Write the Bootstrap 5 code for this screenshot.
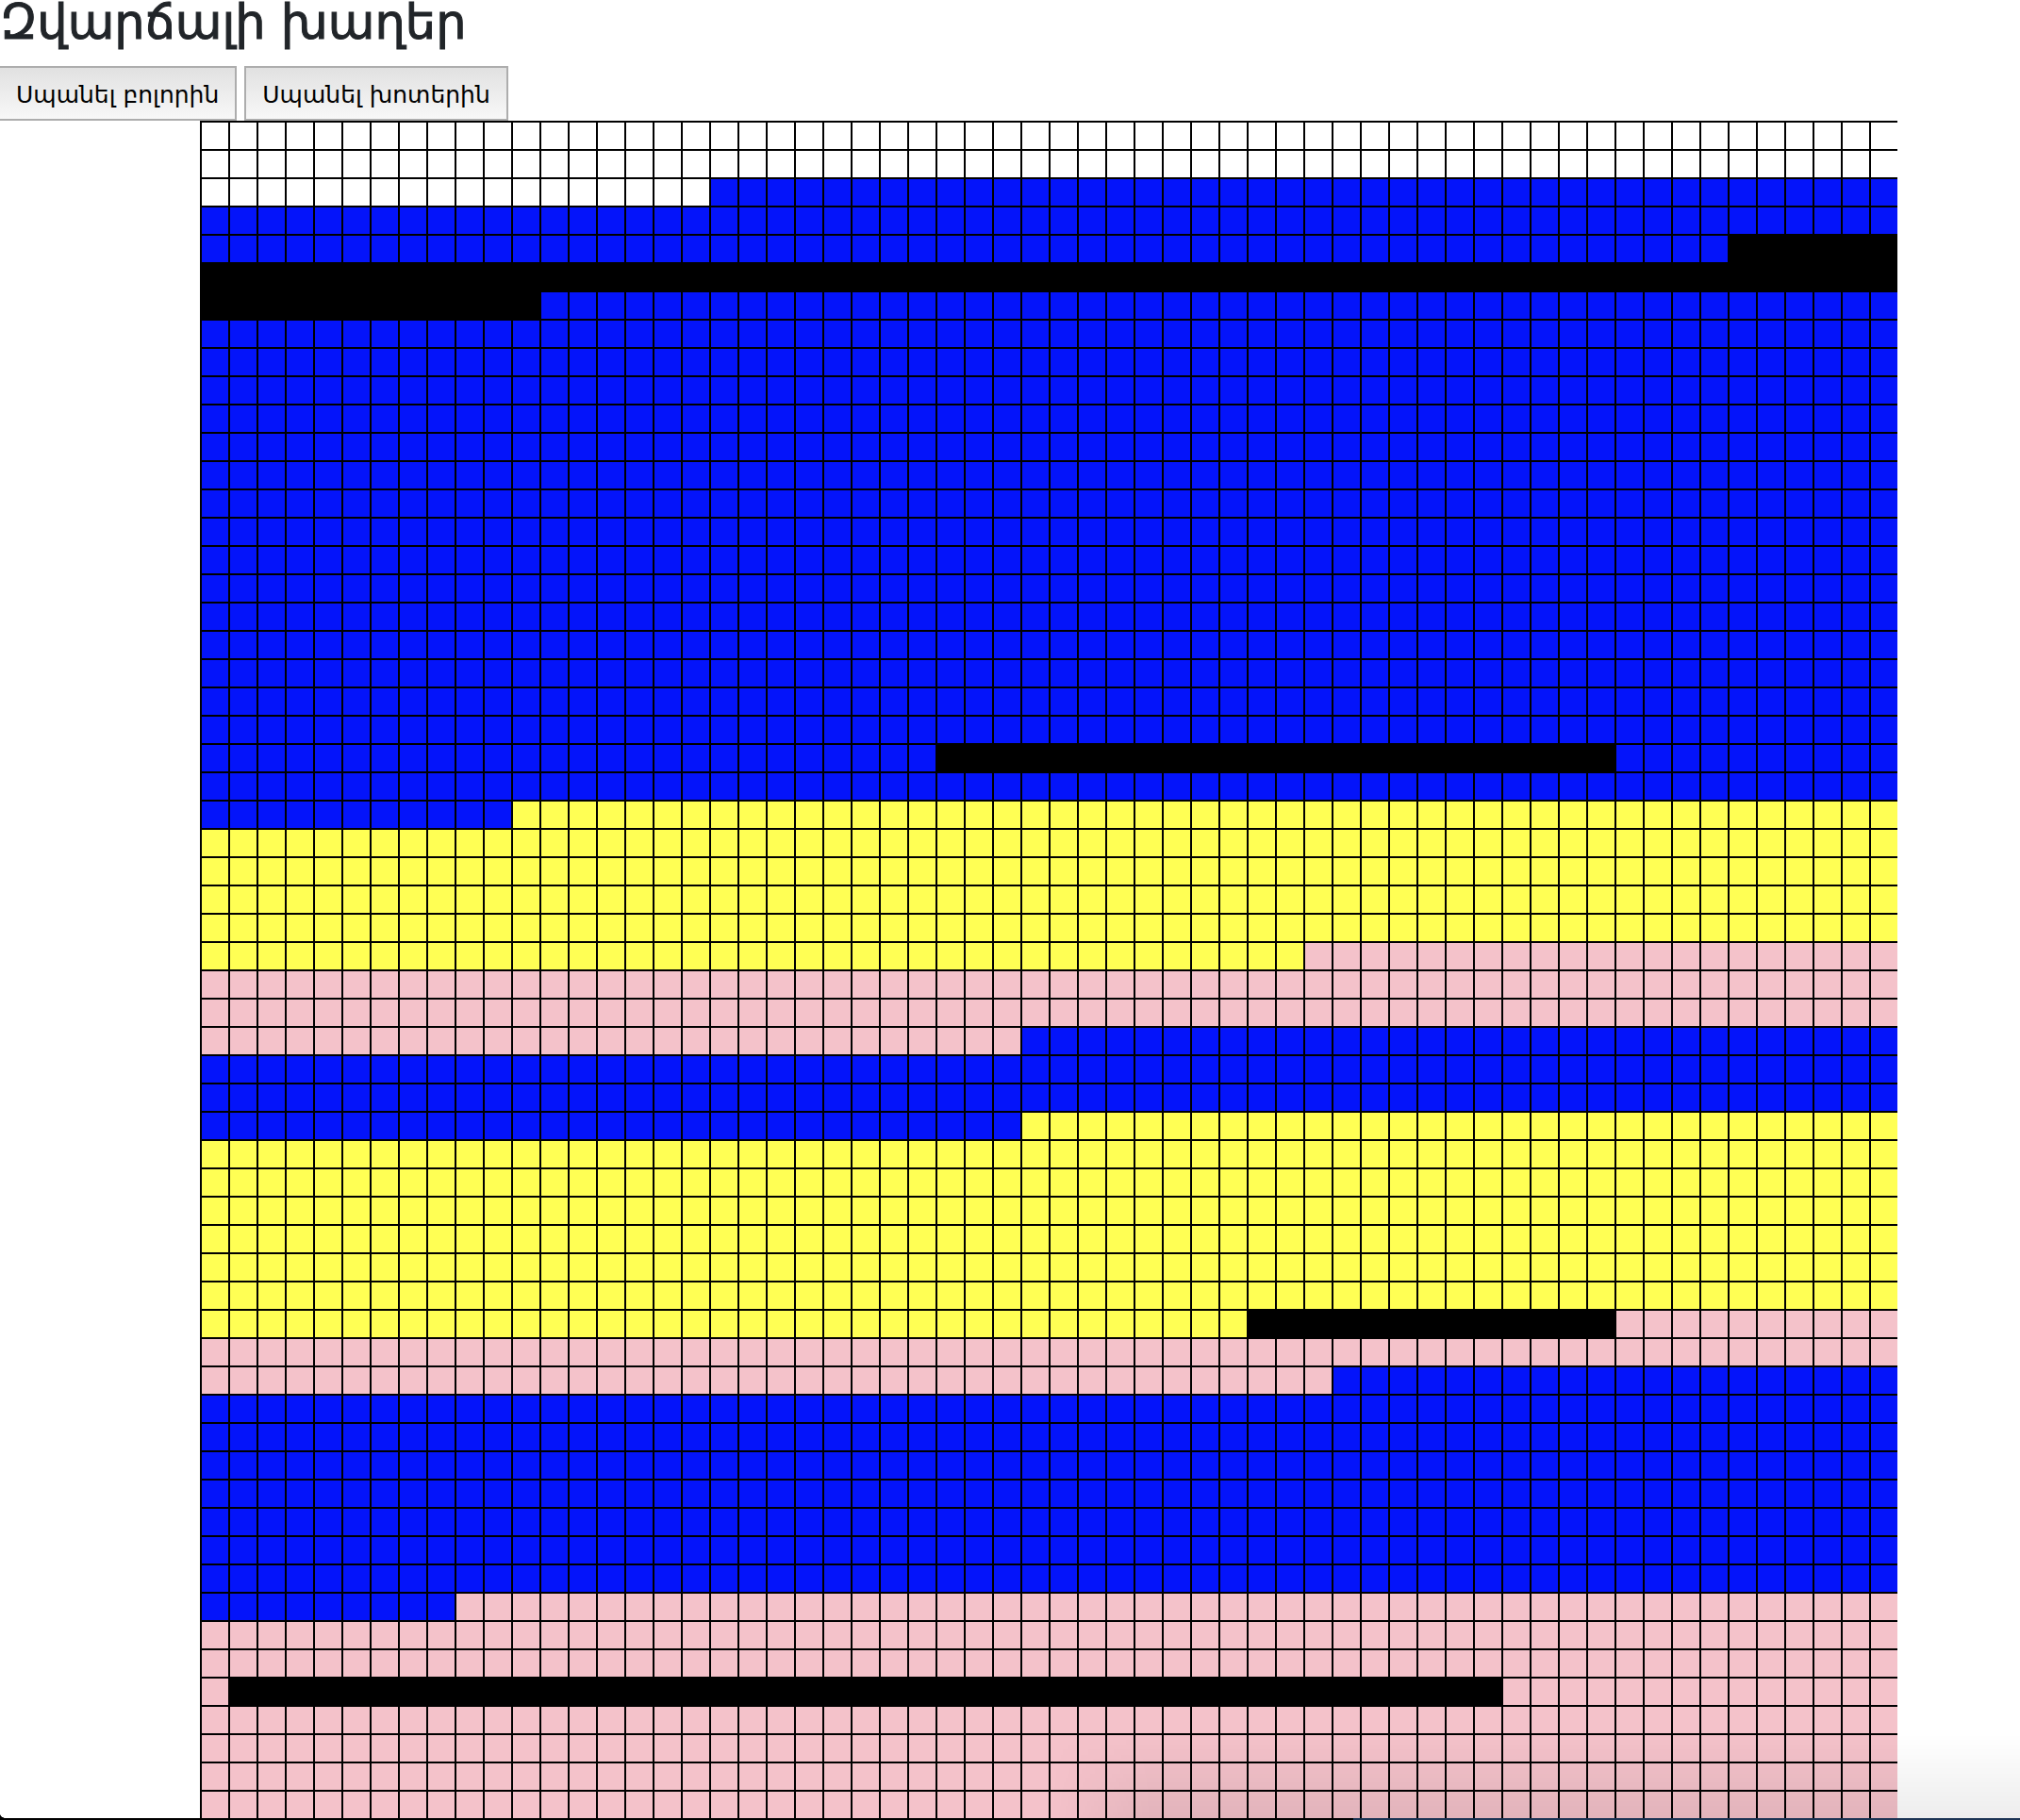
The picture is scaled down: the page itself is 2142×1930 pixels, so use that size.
<!DOCTYPE html>
<html lang="hy">
<head>
<meta charset="utf-8">
<meta name="viewport" content="width=device-width, initial-scale=1">
<title>Զվարճալի խաղեր</title>
<link href="https://cdn.jsdelivr.net/npm/bootstrap@5.3.0/dist/css/bootstrap.min.css" rel="stylesheet">
<style>
  body { font-family: "DejaVu Sans", sans-serif; background: #fff; overflow: hidden; }
  .page-title { font-size: 51px; line-height: 60px; margin-top: -6px; margin-bottom: 16px; font-weight: 400; color: #212529; -webkit-text-stroke: 1px #212529; }
  .kill-btn { height: 58px; padding: 3px 17px 0; border: 2px solid #adadad; background: linear-gradient(#e1e1e1, #f8f8f8); color: #000; font-size: 25px; line-height: 51px; }
  .kill-btn:first-child { border-left: 0; }
  .field { display: grid; grid-template-columns: repeat(60, 30px); grid-auto-rows: 30px; margin-left: 212px; }
  .field i { border-left: 2px solid #000; border-top: 2px solid #000; }
  .soil { background: #fff; } .water { background: #0414fa; } .sand { background: #ffff54; }
  .bloom { background: #f4c2ca; } .stone { background: #000; }
  .window-shade { height: 90px; background: linear-gradient(transparent, rgba(0,0,0,.07)); -webkit-mask-image: linear-gradient(90deg, transparent 52%, #000 57%); mask-image: linear-gradient(90deg, transparent 52%, #000 57%); }
  .window-edge { height: 2px; background: linear-gradient(90deg, #000 67%, #1c3454 67%); }
  .window-corner { width: 6px; height: 4px; margin-top: -4px; background: radial-gradient(ellipse 6px 4px at 100% 0, transparent 90%, #000); }
</style>
<script src="https://cdn.jsdelivr.net/npm/bootstrap@5.3.0/dist/js/bootstrap.bundle.min.js"></script>
</head>
<body>
<header>
  <h1 class="page-title">Զվարճալի խաղեր</h1>
  <div class="d-flex gap-2">
    <button type="button" class="kill-btn">Սպանել բոլորին</button>
    <button type="button" class="kill-btn">Սպանել խոտերին</button>
  </div>
</header>
<main class="field" id="field"></main>
<div class="fixed-bottom pe-none">
  <div class="window-shade"></div>
  <div class="window-corner"></div>
  <div class="window-edge"></div>
</div>
<script>
  // Each run: kind of cell, then the row and column where the run ends.
  const runs = [
    ['soil', 2, 18], ['water', 4, 54], ['stone', 6, 12], ['water', 22, 26], ['stone', 22, 50],
    ['water', 24, 11], ['sand', 29, 39], ['bloom', 32, 29], ['water', 35, 29], ['sand', 42, 37],
    ['stone', 42, 50], ['bloom', 44, 40], ['water', 52, 9], ['bloom', 55, 1], ['stone', 55, 46],
    ['bloom', 60, 0]
  ];
  const field = document.getElementById('field');
  let at = 0;
  for (const [kind, row, col] of runs) {
    for (; at < row * 60 + col; at++) {
      const cell = document.createElement('i');
      cell.className = kind;
      field.append(cell);
    }
  }
</script>
</body>
</html>
